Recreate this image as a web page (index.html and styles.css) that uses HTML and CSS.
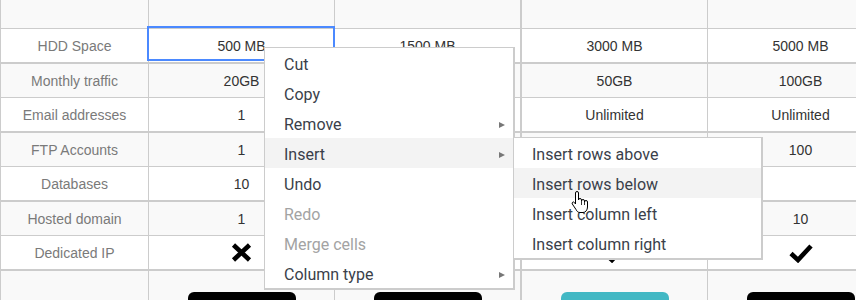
FILE: index.html
```html
<!DOCTYPE html>
<html>
<head>
<meta charset="utf-8">
<link rel="stylesheet" href="styles.css">
</head>
<body>
<div class="sheet">
  <div class="row head">
    <div class="c c1"></div><div class="c c2"></div><div class="c c3"></div><div class="c c4"></div><div class="c c5"></div>
  </div>
  <div class="row even">
    <div class="c c1 label">HDD Space</div><div class="c c2">500 MB</div><div class="c c3">1500 MB</div><div class="c c4">3000 MB</div><div class="c c5">5000 MB</div>
  </div>
  <div class="row odd">
    <div class="c c1 label">Monthly traffic</div><div class="c c2">20GB</div><div class="c c3"></div><div class="c c4">50GB</div><div class="c c5">100GB</div>
  </div>
  <div class="row even">
    <div class="c c1 label">Email addresses</div><div class="c c2">1</div><div class="c c3"></div><div class="c c4">Unlimited</div><div class="c c5">Unlimited</div>
  </div>
  <div class="row odd">
    <div class="c c1 label">FTP Accounts</div><div class="c c2">1</div><div class="c c3"></div><div class="c c4"></div><div class="c c5">100</div>
  </div>
  <div class="row even">
    <div class="c c1 label">Databases</div><div class="c c2">10</div><div class="c c3"></div><div class="c c4"></div><div class="c c5"></div>
  </div>
  <div class="row odd">
    <div class="c c1 label">Hosted domain</div><div class="c c2">1</div><div class="c c3"></div><div class="c c4"></div><div class="c c5">10</div>
  </div>
  <div class="row even">
    <div class="c c1 label">Dedicated IP</div>
    <div class="c c2"><svg class="ico-x" width="21" height="19" viewBox="0 0 21 19"><path d="M2.5 2 L18.5 17 M18.5 2 L2.5 17" stroke="#000" stroke-width="4.6" fill="none"/></svg></div>
    <div class="c c3"><svg class="ico-x" width="21" height="19" viewBox="0 0 21 19"><path d="M2.5 2 L18.5 17 M18.5 2 L2.5 17" stroke="#000" stroke-width="4.6" fill="none"/></svg></div>
    <div class="c c4"><svg class="ico-check" width="24" height="20" viewBox="0 0 24 20"><path d="M2 10.5 L9 17 L22 3" stroke="#000" stroke-width="4.6" fill="none"/></svg></div>
    <div class="c c5"><svg class="ico-check" width="24" height="20" viewBox="0 0 24 20"><path d="M2 10.5 L9 17 L22 3" stroke="#000" stroke-width="4.6" fill="none"/></svg></div>
  </div>
  <div class="row last">
    <div class="c c1 btncell"></div>
    <div class="c c2 btncell"><div class="btn dark"></div></div>
    <div class="c c3 btncell"><div class="btn dark"></div></div>
    <div class="c c4 btncell"><div class="btn teal"></div></div>
    <div class="c c5 btncell"><div class="btn dark"></div></div>
  </div>
</div>

<div class="selection"></div>

<div class="menu main">
  <div class="item">Cut</div>
  <div class="item">Copy</div>
  <div class="item">Remove<span class="arrow"></span></div>
  <div class="item hover">Insert<span class="arrow"></span></div>
  <div class="item">Undo</div>
  <div class="item disabled">Redo</div>
  <div class="item disabled">Merge cells</div>
  <div class="item">Column type<span class="arrow"></span></div>
</div>

<div class="menu sub">
  <div class="item">Insert rows above</div>
  <div class="item hover">Insert rows below</div>
  <div class="item">Insert column left</div>
  <div class="item">Insert column right</div>
</div>

<svg class="cursor" width="18" height="24" viewBox="0 0 18 24">
  <path d="M4.5 3 a1.5 1.5 0 0 1 3 0 V10 a1.5 1.5 0 0 1 3 0 V11 a1.5 1.5 0 0 1 3 0 V12 a1.5 1.5 0 0 1 3 0 V17 c0 3 -2 5.5 -4.5 5.5 H9 c-2 0 -3 -1 -4 -3 L1.3 14 a1.3 1.3 0 0 1 2.2 -1.4 L4.5 14 Z" fill="#fff" stroke="#000" stroke-width="1"/>
  <path d="M10.5 11 V15 M13.5 12 V15" stroke="#000" stroke-width="0.8"/>
</svg>
</body>
</html>
```

FILE: styles.css
```css
html, body {
  margin: 0;
  padding: 0;
  background: #fff;
}
html {
  overflow: hidden;
}
body {
  width: 856px;
  height: 300px;
  overflow: hidden;
  position: relative;
  font-family: "Liberation Sans", Arial, sans-serif;
  font-size: 14px;
  color: #333;
}
.sheet {
  width: 894px;
  border-left: 1px solid #ccc;
}
.row {
  display: flex;
  box-sizing: border-box;
}
.row.head {
  height: 29px;
  background: #f9f9f9;
  border-bottom: 1px solid #ccc;
}
.row.even {
  height: 35px;
  background: #fff;
  border-bottom: 2px solid #ccc;
}
.row.odd {
  height: 34px;
  background: #f9f9f9;
  border-bottom: 1px solid #ccc;
}
.row.last {
  height: 29px;
  overflow: hidden;
  background: #f9f9f9;
}
.c {
  box-sizing: border-box;
  display: flex;
  align-items: center;
  justify-content: center;
  border-right: 1px solid #ccc;
  flex: none;
  white-space: nowrap;
}
.c1 { width: 148px; }
.c2 { width: 186px; }
.c3 { width: 187px; border-right-width: 2px; }
.c4 { width: 186px; }
.c5 { width: 186px; }
.label {
  color: #7a7a7a;
}
.btncell {
  align-items: flex-start;
  padding-top: 21px;
  overflow: hidden;
}
.btn {
  width: 108px;
  height: 36px;
  flex: none;
  border-radius: 6px;
}
.btn.dark { background: #000; }
.btn.teal { background: #42b8c4; }

.selection {
  position: absolute;
  left: 147px;
  top: 26px;
  width: 188px;
  height: 35px;
  box-sizing: border-box;
  border: 2px solid #4b89ff;
}

.menu {
  position: absolute;
  box-sizing: border-box;
  background: #fff;
  border: 1px solid #ccc;
  border-right-width: 2px;
  border-bottom-width: 2px;
  font-family: Roboto, "Noto Sans", sans-serif;
  font-size: 16px;
  color: #3a3f4a;
}
.menu.main {
  left: 264px;
  top: 47px;
  width: 251px;
}
.menu.sub {
  left: 513px;
  top: 137px;
  width: 250px;
}
.item {
  height: 30px;
  box-sizing: border-box;
  display: flex;
  align-items: center;
  justify-content: space-between;
  padding: 3px 8px 0 19px;
  white-space: nowrap;
}
.menu.sub .item {
  padding-left: 18px;
}
.item.hover {
  background: #f3f3f3;
}
.item.disabled {
  color: #a3a3a3;
}
.arrow {
  width: 0;
  height: 0;
  border-left: 6px solid #777;
  border-top: 3.5px solid transparent;
  border-bottom: 3.5px solid transparent;
}
.cursor {
  position: absolute;
  left: 571px;
  top: 190px;
}
```
